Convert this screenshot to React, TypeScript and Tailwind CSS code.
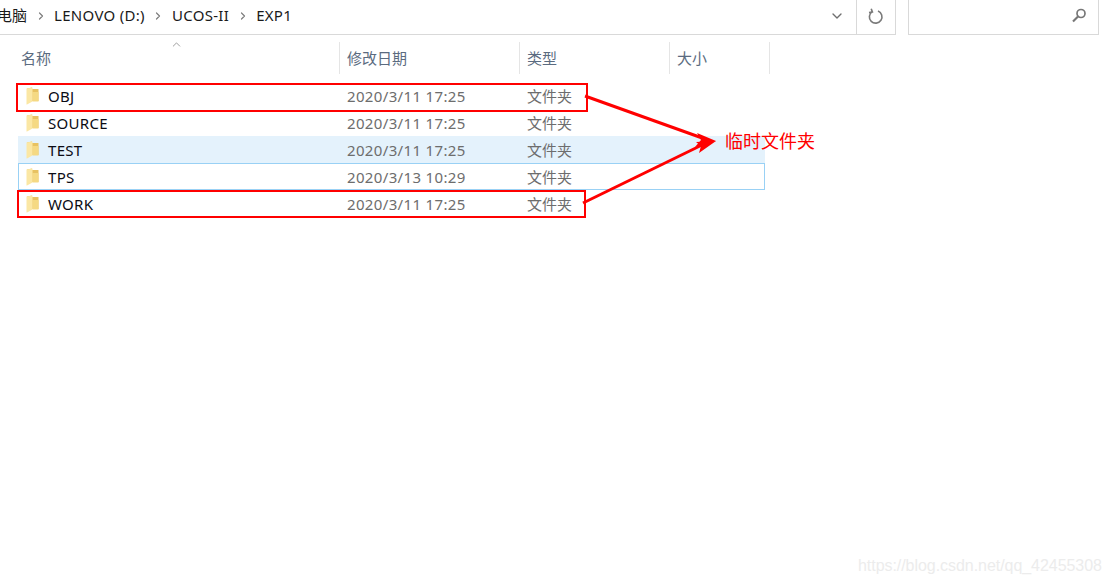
import { ChevronRight, ChevronDown, ChevronUp } from "lucide-react"

const crumbs = ["LENOVO (D:)", "UCOS-II", "EXP1"]

const rows = [
  { name: "OBJ", date: "2020/3/11 17:25" },
  { name: "SOURCE", date: "2020/3/11 17:25" },
  { name: "TEST", date: "2020/3/11 17:25", state: "hover" },
  { name: "TPS", date: "2020/3/13 10:29", state: "focus" },
  { name: "WORK", date: "2020/3/11 17:25" },
]

const columns = [
  { label: "名称", width: "w-[322px]" },
  { label: "修改日期", width: "w-[180px]" },
  { label: "类型", width: "w-[150px]" },
  { label: "大小", width: "w-[100px]" },
]

function FolderIcon() {
  return (
    <svg width="13" height="18" viewBox="0 0 13 18" className="shrink-0 -translate-y-[1px]">
      <path d="M1 1.5 L6 0.5 L6 2 L12.5 2 L12.5 14 L1 14 Z" fill="#e8c262" />
      <path d="M6.5 5 L12.5 5 L12.5 14.5 L6.5 14.5 Z" fill="#f5d983" />
      <path d="M0.5 1.5 L6.5 0.5 L6.5 14.5 L1 17.5 L0.5 17.5 Z" fill="#fbe7a4" />
    </svg>
  )
}

function FileRow({ name, date, state }: { name: string; date: string; state?: string }) {
  const tone =
    state === "hover"
      ? "bg-[#e4f2fc] border-[#e4f2fc]"
      : state === "focus"
        ? "border-[#99d1f5]"
        : "border-transparent"
  return (
    <div className={`flex h-[27px] w-[747px] items-center border pt-[2px] ${tone}`}>
      <div className="flex w-[320px] items-center gap-[9px] pl-[7px] text-[15px] tracking-[0.3px] text-[#0b0b14]">
        <FolderIcon />
        <span>{name}</span>
      </div>
      <div className="w-[180px] pl-[8px] text-[15px] tracking-[0.35px] text-[#6d6d6d]">{date}</div>
      <div className="w-[150px] pl-[8px] text-[15px] text-[#6d6d6d]">文件夹</div>
    </div>
  )
}

export default function App() {
  return (
    <div className="relative h-[584px] w-[1111px] overflow-hidden bg-white font-['Noto_Sans','Noto_Sans_CJK_SC',sans-serif]">
      {/* Address bar */}
      <div className="flex h-[35px] items-stretch">
        <div className="flex w-[896px] items-stretch border-r border-b border-[#d9d9d9]">
          <div className="flex flex-1 items-center overflow-hidden pb-[3px] text-[15px] tracking-[0.3px] text-[#1a1a1a]">
            <span className="ml-[-3px] tracking-normal">电脑</span>
            {crumbs.map((c) => (
              <div key={c} className="flex items-center">
                <ChevronRight size={12} strokeWidth={2.4} className="mx-[7.5px] text-[#7d7d7d]" />
                <span>{c}</span>
              </div>
            ))}
          </div>
          <div className="flex w-[38px] items-center justify-center pb-[2px]">
            <ChevronDown size={16} strokeWidth={2} className="text-[#6f6f6f]" />
          </div>
          <div className="flex w-[39px] items-center justify-center border-l border-[#d9d9d9] pb-[2px]">
            <svg width="16" height="17" viewBox="0 0 16 17" fill="none" stroke="#7a7a7a" strokeWidth="1.6">
              <path d="M4.2 3.6 A6.3 6.3 0 1 0 10 3" />
              <path d="M3.2 0.8 L4.4 4 L1 4.6" />
            </svg>
          </div>
        </div>
        <div className="ml-[12px] flex w-[191px] items-center justify-end border-x border-b border-[#d9d9d9] pr-[11px] pb-[3px]">
          <svg width="15" height="15" viewBox="0 0 15 15" fill="none" stroke="#777777">
            <circle cx="9" cy="5.5" r="4" strokeWidth="1.7" />
            <path d="M6 8.5 L1 13.5" strokeWidth="2.2" />
          </svg>
        </div>
      </div>

      {/* Column header */}
      <div className="relative ml-[18px] mt-[7px] flex h-[32px]">
        {columns.map((col, i) => (
          <div
            key={col.label}
            className={`${col.width} flex items-center border-r border-[#e5e5e5] text-[15px] text-[#5b6b80] ${i === 0 ? "pl-[3px]" : "pl-[7px]"}`}
          >
            {col.label}
          </div>
        ))}
        <ChevronUp size={13} strokeWidth={1.4} className="absolute left-[152px] top-[-4px] text-[#808080]" />
      </div>

      {/* Files */}
      <div className="ml-[18px] mt-[8px] flex flex-col">
        {rows.map((r) => (
          <FileRow key={r.name} name={r.name} date={r.date} state={r.state} />
        ))}
      </div>

      {/* Annotations */}
      <div className="absolute left-[16px] top-[83px] h-[29px] w-[572px] border-2 border-[#ff0000]" />
      <div className="absolute left-[17px] top-[190px] h-[28px] w-[569px] border-2 border-[#ff0000]" />
      <svg width="1111" height="584" className="pointer-events-none absolute left-0 top-0">
        <line x1="585" y1="96" x2="705" y2="139" stroke="#ff0000" strokeWidth="3" />
        <polygon points="716,141 697,133 701,140 695,147" fill="#ff0000" />
        <line x1="583" y1="203" x2="704" y2="144" stroke="#ff0000" strokeWidth="3" />
        <polygon points="716,141 696,142 701,146 699,153" fill="#ff0000" />
      </svg>
      <span className="absolute left-[725px] top-[129px] text-[18px] leading-[24px] text-[#ff0000]">临时文件夹</span>

      <span className="absolute left-[858px] top-[556px] font-['Liberation_Sans',sans-serif] text-[16px] tracking-[-0.05px] leading-[20px] text-[#ececec]">
        https://blog.csdn.net/qq_42455308
      </span>
    </div>
  )
}
